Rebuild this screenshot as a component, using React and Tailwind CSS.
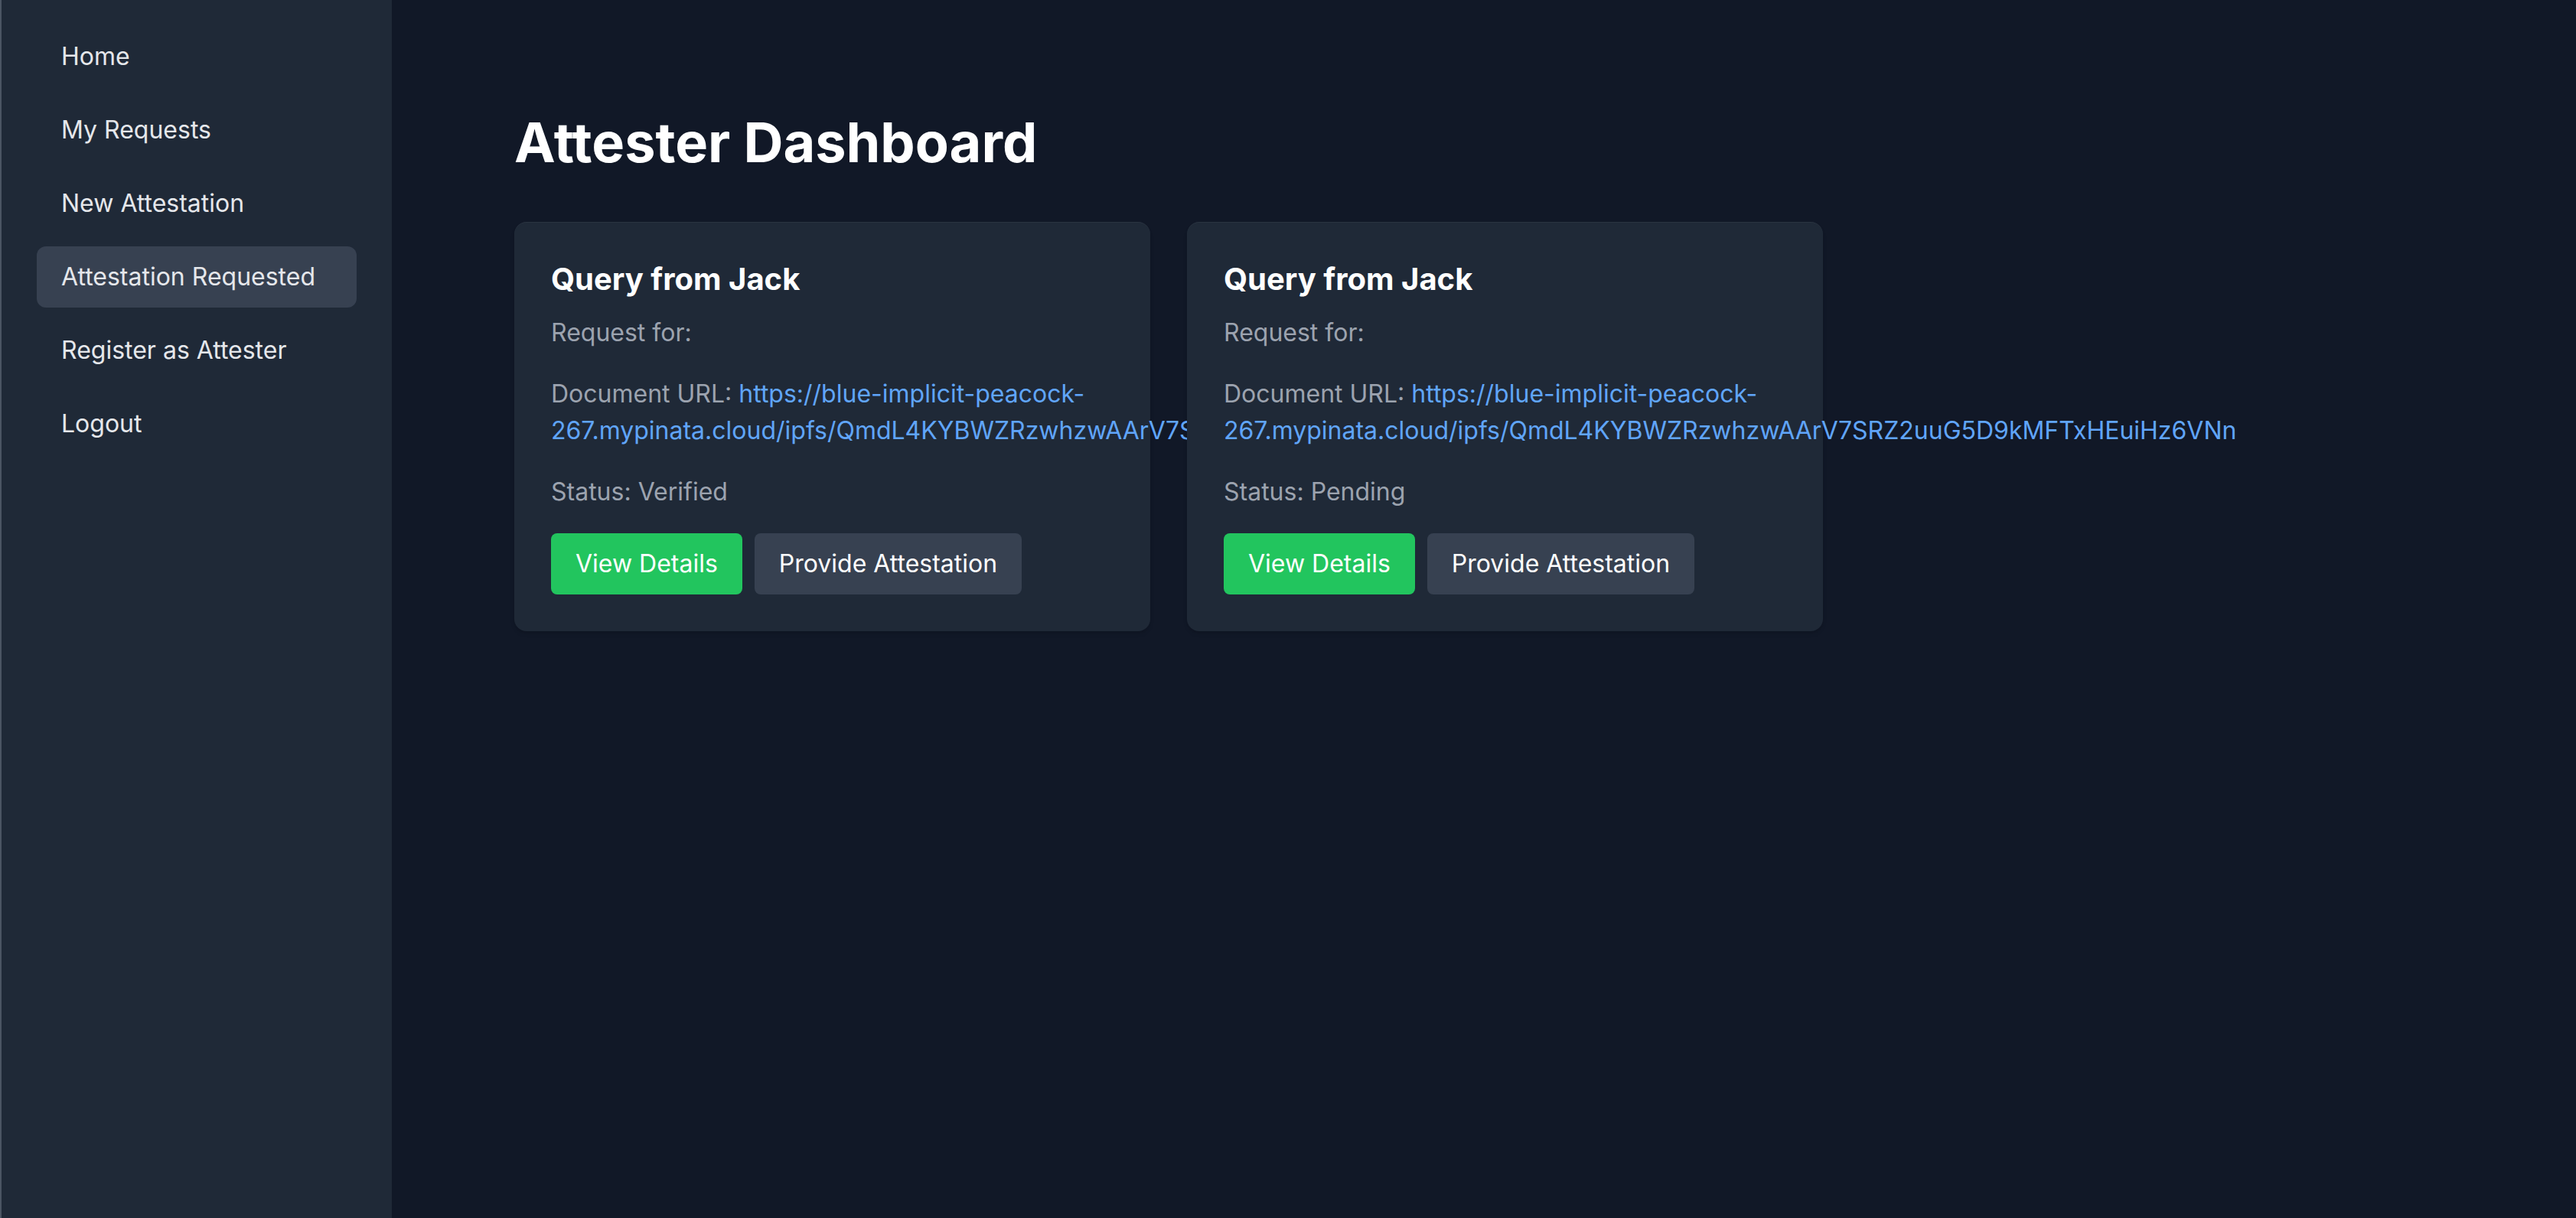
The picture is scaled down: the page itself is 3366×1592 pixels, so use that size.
import React from "react";

const navItems = [
  "Home",
  "My Requests",
  "New Attestation",
  "Attestation Requested",
  "Register as Attester",
  "Logout",
];

const url =
  "https://blue-implicit-peacock-267.mypinata.cloud/ipfs/QmdL4KYBWZRzwhzwAArV7SRZ2uuG5D9kMFTxHEuiHz6VNn";

const requests = [
  { id: 1, from: "Jack", status: "Verified" },
  { id: 2, from: "Jack", status: "Pending" },
];

const App = () => {
  return (
    <div
      className="flex min-h-screen w-full bg-[#111827]"
      style={{ fontFamily: "Inter, 'Noto Sans', sans-serif" }}
    >
      <aside className="w-[512px] shrink-0 bg-[#1f2937] border-l-[2px] border-[#4b5563] pt-[34px] px-[46px]">
        <nav className="flex flex-col gap-[16px]">
          {navItems.map((item) => (
            <div
              key={item}
              className={`px-[32px] py-[16px] text-[32px] leading-[48px] rounded-[12px] text-[#e5e7eb] ${
                item === "Attestation Requested" ? "bg-[#374151]" : ""
              }`}
            >
              {item}
            </div>
          ))}
        </nav>
      </aside>

      <main className="flex-1 pt-[146px] pl-[160px]">
        <h1 className="text-[72px] leading-[80px] font-bold text-white mb-[64px]">
          Attester Dashboard
        </h1>

        <div className="grid grid-cols-[repeat(3,831px)] gap-[48px]">
          {requests.map((req) => (
            <div
              key={req.id}
              className="bg-[#1f2937] rounded-[16px] px-[48px] pt-[46px] pb-[48px] border-t border-white/5 shadow-md"
            >
              <h3 className="text-[40px] leading-[56px] font-bold text-white mb-[18px]">
                Query from {req.from}
              </h3>
              <p className="text-[32px] leading-[48px] text-[#9ca3af] mb-[32px]">Request for:</p>
              <p className="text-[32px] leading-[48px] text-[#9ca3af] mb-[32px]">
                Document URL: <a className="text-[#60a5fa]">{url}</a>
              </p>
              <p className="text-[32px] leading-[48px] text-[#9ca3af] mb-[30px]">
                Status: {req.status}
              </p>
              <div className="flex gap-[16px]">
                <button className="px-[32px] py-[16px] text-[32px] leading-[48px] rounded-[8px] bg-[#22c55e] text-white">
                  View Details
                </button>
                <button className="px-[32px] py-[16px] text-[32px] leading-[48px] rounded-[8px] bg-[#374151] text-white">
                  Provide Attestation
                </button>
              </div>
            </div>
          ))}
        </div>
      </main>
    </div>
  );
};

export default App;
